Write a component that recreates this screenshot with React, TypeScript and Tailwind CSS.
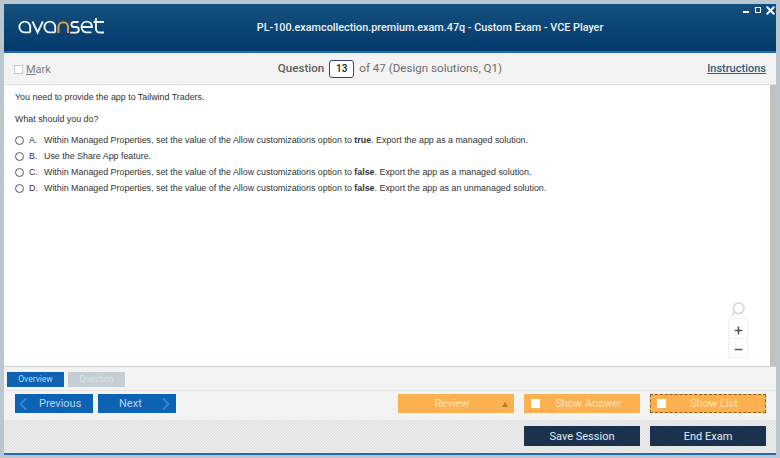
import { ChevronLeft, ChevronRight, Minus, Plus, Search, X } from "lucide-react";

const options = [
  { key: "A.", before: "Within Managed Properties, set the value of the Allow customizations option to ", bold: "true", after: ". Export the app as a managed solution." },
  { key: "B.", before: "Use the Share App feature.", bold: "", after: "" },
  { key: "C.", before: "Within Managed Properties, set the value of the Allow customizations option to ", bold: "false", after: ". Export the app as a managed solution." },
  { key: "D.", before: "Within Managed Properties, set the value of the Allow customizations option to ", bold: "false", after: ". Export the app as an unmanaged solution." },
];

function Logo() {
  return (
    <svg width="90" height="20" viewBox="0 0 90 20" fill="none" strokeWidth="1.9" stroke="#eef3f6" aria-label="avanset" className="-mt-[3px] ml-[11px] shrink-0">
      <path d="M15.2 16.6V11A5.4 5.4 0 1 0 9.8 16.4H15.2" />
      <path d="M17.5 5.5L22.6 16.5L27.8 5.5" />
      <path d="M40.2 16.6V11A5.4 5.4 0 1 0 34.8 16.4H40.2" />
      <path d="M43.5 17V10.5A4.8 4.8 0 0 1 53 10.5V17" stroke="#e8a040" />
      <path d="M63.5 6H58.3A2.6 2.6 0 0 0 58.3 11H61A2.8 2.8 0 0 1 61 16.6H55.2" />
      <path d="M66.6 11H77C77 7.5 75 5.6 71.8 5.6C68.6 5.6 66.6 8 66.6 11C66.6 14 68.6 16.4 71.8 16.4H76.5" />
      <path d="M81 2V13A3.5 3.5 0 0 0 84.5 16.5H89M78.5 6H89" />
    </svg>
  );
}

function OrangeToggle({ label, dashed }: { label: string; dashed?: boolean }) {
  return (
    <div
      className={
        dashed
          ? "flex h-[19px] w-[116px] items-center border border-dashed border-[#8a5a1c] bg-[#fdb04f] pl-[6px] text-[#ffe3bd]"
          : "flex h-[19px] w-[116px] items-center bg-[#fdb04f] pl-[7px] text-[#ffe3bd]"
      }
    >
      <span className="h-[9px] w-[9px] shrink-0 bg-white" />
      <span className="flex-1 pt-[2px] pr-[3px] text-center">{label}</span>
    </div>
  );
}

export default function App() {
  return (
    <div className="flex h-[458px] w-[780px] flex-col overflow-hidden bg-[#b9c8ce] pt-[4px] pr-[4px] pb-[3px] pl-[4px] font-['Roboto',sans-serif]">
      <header className="relative flex h-[49px] shrink-0 items-center border-b-2 border-[#1f6db3] bg-gradient-to-b from-[#15507f] to-[#023a6b]">
        <Logo />
        <h1 className="ml-[149px] flex-1 pt-[2px] pr-[170px] text-center text-[10.8px] font-medium whitespace-nowrap text-[#eef3f6]">
          PL-100.examcollection.premium.exam.47q - Custom Exam - VCE Player
        </h1>
        <div className="absolute top-0 right-[-1px] flex h-[13px] items-center text-white">
          <span className="mt-[3px] h-[2px] w-[6px] bg-white" />
          <span className="-mt-[1px] ml-[6px] h-[6px] w-[6px] border border-white" />
          <X size={13} strokeWidth={3.5} className="ml-[3px]" />
        </div>
      </header>

      <div className="flex h-[32px] shrink-0 items-center justify-between border-b border-[#dfdfdf] bg-[#f3f3f3] pr-[10px] pl-[10px]">
        <div className="flex w-[200px] items-center gap-[3px] text-[11px] text-[#808080]">
          <span className="mt-[2px] h-[9px] w-[9px] border border-[#c8c8c8] bg-white" />
          <span className="mt-[3px]">
            <span className="underline">M</span>ark
          </span>
        </div>
        <div className="flex items-center text-[11.6px] text-[#6d6d6d]">
          <span className="font-medium text-[#5c5c5c]">Question</span>
          <span className="mx-[5px] flex h-[18px] w-[25px] items-center justify-center rounded-[3px] border border-[#3b3f80] bg-white text-[10px] font-medium text-[#222222]">13</span>
          <span>of 47 (Design solutions, Q1)</span>
        </div>
        <a className="mt-[1px] w-[200px] text-right text-[11px] font-medium text-[#2f5b80] underline">Instructions</a>
      </div>

      <main className="relative min-h-0 flex-1 bg-white pt-[6px] pl-[11px] font-['Liberation_Sans',sans-serif] text-[8.9px] text-[#333333]">
        <p className="h-[12px] leading-[12px]">You need to provide the app to Tailwind Traders.</p>
        <p className="mt-[10px] h-[12px] leading-[12px]">What should you do?</p>
        <ul className="mt-[9px] flex flex-col gap-[4px]">
          {options.map((o) => (
            <li key={o.key} className="flex h-[12px] items-center leading-[12px]">
              <span className="h-[9px] w-[9px] rounded-full border border-[#5a5a5a]" />
              <span className="ml-[5px] w-[15px]">{o.key}</span>
              <span>
                {o.before}
                {o.bold && <b>{o.bold}</b>}
                {o.after}
              </span>
            </li>
          ))}
        </ul>
        <div className="absolute top-0 right-0 bottom-0 w-[6px] bg-[#c3c0bc]" />
        <div className="absolute right-[28px] bottom-[8px] flex flex-col items-center text-[#555555]">
          <Search size={16} strokeWidth={2.4} className="mb-[1px] -scale-x-100 text-[#d6d6d6]" />
          <div className="flex h-[40px] w-[20px] flex-col items-center rounded-[2px] border border-[#efefef]">
            <div className="flex h-[20px] w-full items-center justify-center border-b border-[#efefef] pt-[3px]">
              <Plus size={11} strokeWidth={3.5} />
            </div>
            <div className="flex flex-1 items-center justify-center pt-[2px]">
              <Minus size={11} strokeWidth={3.5} />
            </div>
          </div>
        </div>
      </main>

      <div className="flex h-[24px] shrink-0 items-end gap-[4px] border-t border-[#c9d2d4] bg-[#f3f3f3] pb-[3px] pl-[3px] text-[8.5px]">
        <div className="flex h-[15px] w-[57px] items-center justify-center bg-[#0d62b4] text-[#bcd7f2]">Overview</div>
        <div className="flex h-[15px] w-[57px] items-center justify-center bg-[#c5ced4] text-[#dfe5e8]">Question</div>
      </div>

      <div className="flex h-[30px] shrink-0 items-start justify-between border-t border-[#e6e6e6] bg-[#f3f3f3] pt-[3px] pr-[10px] pl-[11px] text-[11px]">
        <div className="flex gap-[5px] text-[#b5d5f5]">
          <div className="flex h-[19px] w-[78px] items-center bg-[#0d62b4]">
            <ChevronLeft size={20} strokeWidth={2.5} className="-ml-[2px] text-[#2f86dc]" />
            <span className="ml-[6px] pt-[2px]">Previous</span>
          </div>
          <div className="flex h-[19px] w-[78px] items-center justify-between bg-[#0d62b4] pl-[21px]">
            <span className="pt-[2px]">Next</span>
            <ChevronRight size={20} strokeWidth={2.5} className="text-[#2f86dc]" />
          </div>
        </div>
        <div className="flex gap-[10px]">
          <div className="relative flex h-[19px] w-[116px] items-center justify-center bg-[#fdb04f] pt-[2px] pr-[8px] text-[#ffe3bd]">
            Review
            <span className="absolute top-[8px] right-[6px] h-0 w-0 border-x-[3px] border-b-[5px] border-x-transparent border-b-[#b97a34]" />
          </div>
          <OrangeToggle label="Show Answer" />
          <OrangeToggle label="Show List" dashed />
        </div>
      </div>

      <div className="flex h-[35px] shrink-0 items-start justify-end gap-[10px] border-b-2 border-[#1f6db3] bg-[repeating-linear-gradient(135deg,#e2e2e2_0,#e2e2e2_1px,#f1f1f1_1px,#f1f1f1_2.1213px)] pt-[6px] pr-[10px] text-[11px] text-[#e3edf3]">
        <div className="flex h-[20px] w-[116px] items-center justify-center bg-[#1a324e] pt-[2px]">Save Session</div>
        <div className="flex h-[20px] w-[116px] items-center justify-center bg-[#1a324e] pt-[2px]">End Exam</div>
      </div>
    </div>
  );
}
